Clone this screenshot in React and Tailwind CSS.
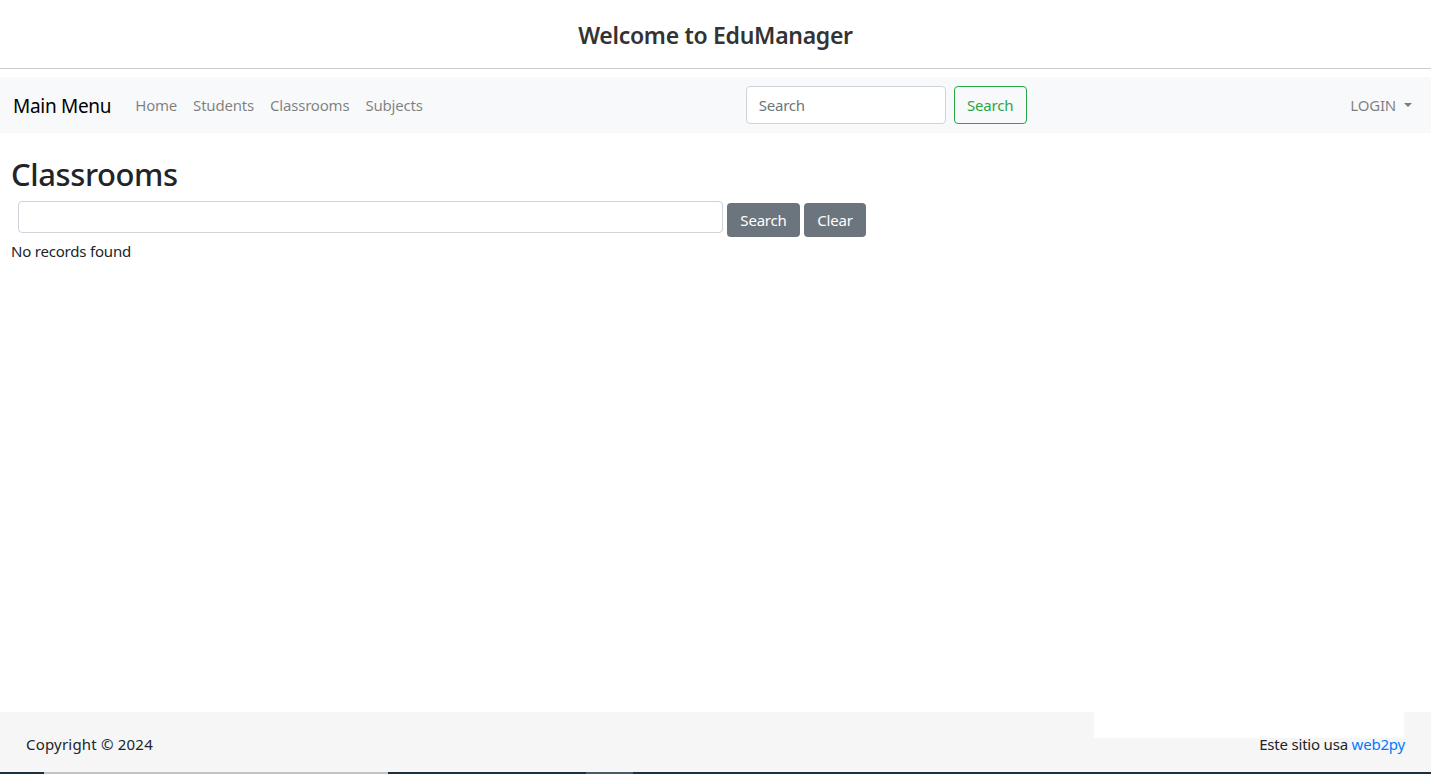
import React from "react";

export default function App() {
  return (
    <div className="flex h-[774px] w-full flex-col bg-white text-[#212529] [font-family:'Noto_Sans',sans-serif]">
      <header className="flex h-[69px] items-center justify-center border-b border-[#cccccc]">
        <h2 className="pt-[3px] text-[23px] font-semibold leading-none tracking-[-0.3px] text-[#333333]">Welcome to EduManager</h2>
      </header>
      <nav className="mt-[8px] flex h-[56px] items-center bg-[#f8f9fa] pl-[13px] pr-[19px]">
        <span className="pt-[2px] text-[19px] leading-none tracking-[-0.3px] text-black">Main Menu</span>
        <ul className="ml-[16px] flex items-center text-[15px] tracking-[-0.2px] text-[rgba(0,0,0,0.5)]">
          <li className="px-[8px]">Home</li>
          <li className="px-[8px]">Students</li>
          <li className="px-[8px]">Classrooms</li>
          <li className="px-[8px]">Subjects</li>
        </ul>
        <div className="ml-[315px] flex items-center gap-[8px]">
          <div className="flex h-[38px] w-[200px] items-center rounded-[4px] border border-[#ced4da] bg-white px-[12px] text-[15px] tracking-[-0.2px] text-[#6c757d]">Search</div>
          <button className="h-[38px] w-[73px] rounded-[4px] border border-[#28a745] text-[15px] tracking-[-0.2px] text-[#28a745]">Search</button>
        </div>
        <div className="ml-auto flex items-center gap-[8px] text-[15px] tracking-[-0.2px] text-[rgba(0,0,0,0.5)]">
          <span>LOGIN</span>
          <span className="h-0 w-0 border-x-[4px] border-t-[4px] border-x-transparent border-t-[rgba(0,0,0,0.5)]"></span>
        </div>
      </nav>
      <main className="flex-1 px-[11px] pt-[23px]">
        <h1 className="text-[31px] font-medium leading-[36px] tracking-[-0.4px]">Classrooms</h1>
        <div className="mt-[9px] flex items-start gap-[4px] pl-[7px]">
          <div className="h-[32px] w-[705px] rounded-[4px] border border-[#ced4da] bg-white"></div>
          <button className="mt-[2px] h-[34px] w-[73px] rounded-[4px] bg-[#6c757d] text-[15px] tracking-[-0.2px] text-white">Search</button>
          <button className="mt-[2px] h-[34px] w-[62px] rounded-[4px] bg-[#6c757d] text-[15px] tracking-[-0.2px] text-white">Clear</button>
        </div>
        <p className="mt-[2px] text-[15px] leading-[24px] tracking-[-0.2px]">No records found</p>
      </main>
      <footer className="relative h-[60px] bg-[#f6f6f6]">
        <div className="absolute right-[27px] top-0 h-[26px] w-[310px] bg-white"></div>
        <div className="flex h-full items-end justify-between px-[26px] pb-[20px] text-[15px] leading-none tracking-[-0.2px]">
          <span className="tracking-[0.2px]">Copyright © 2024</span>
          <span>Este sitio usa <span className="text-[#007bff]">web2py</span></span>
        </div>
      </footer>
      <div className="flex h-[2px] w-full bg-[#1c2f3c]">
        <div className="w-[44px]"></div>
        <div className="w-[344px] bg-[#c4c4c4]"></div>
        <div className="w-[198px]"></div>
        <div className="w-[47px] bg-[#4a5b65]"></div>
      </div>
    </div>
  );
}
